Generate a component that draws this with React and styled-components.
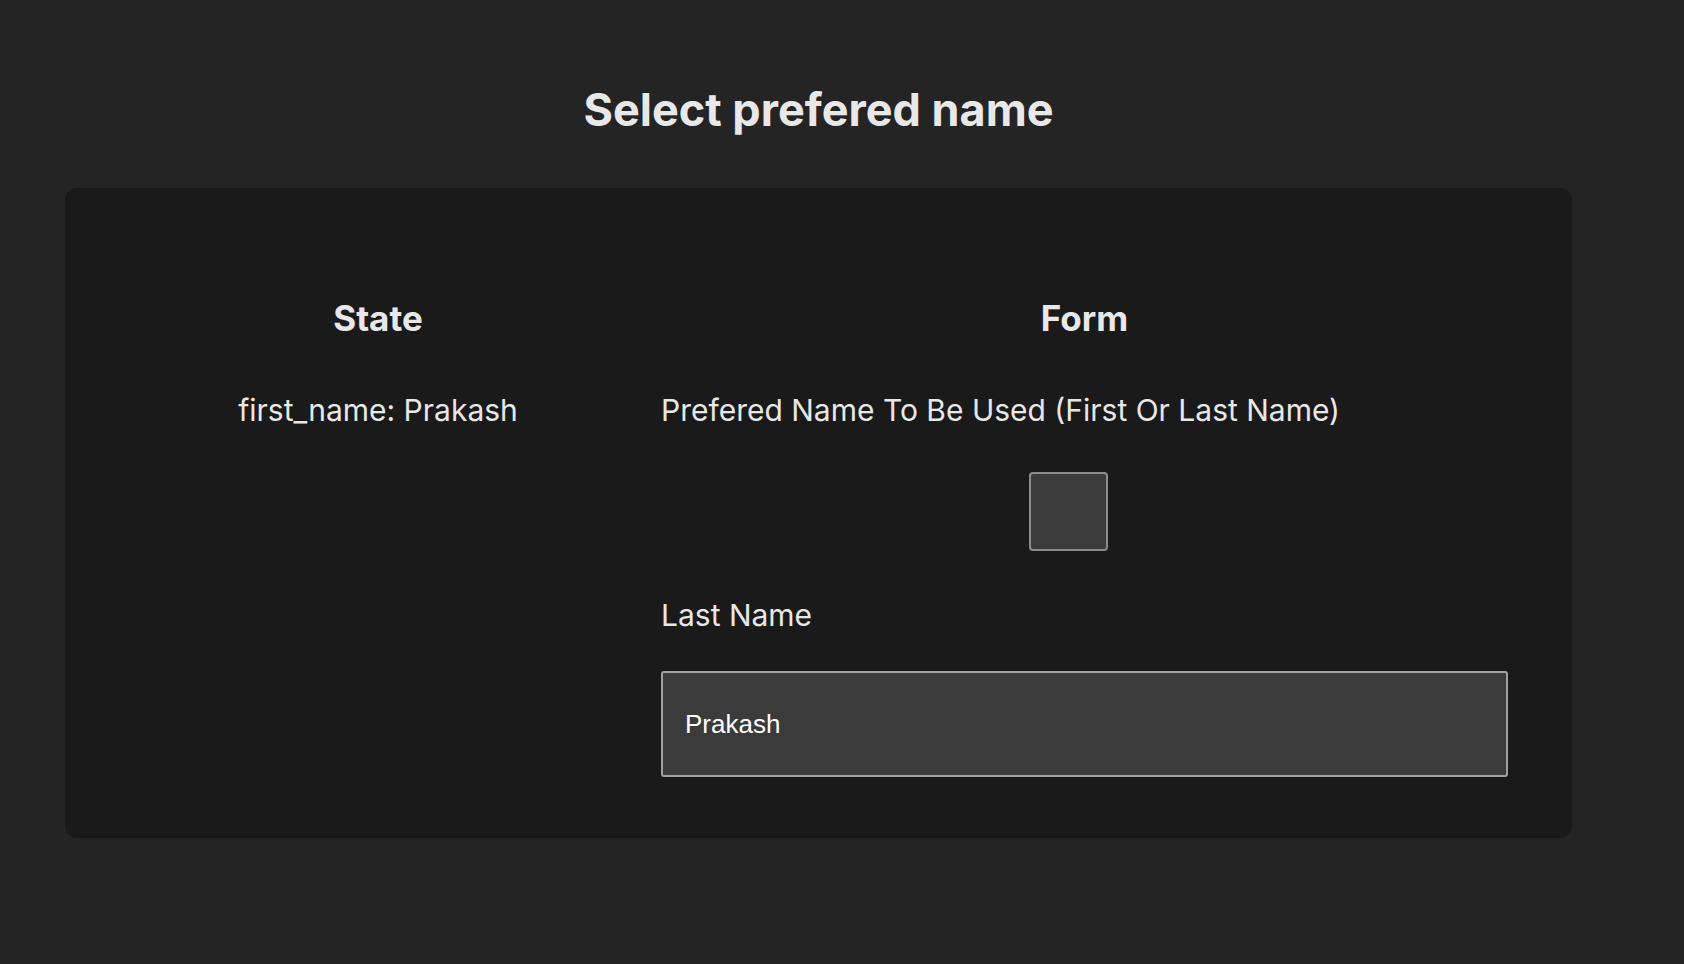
import styled, { createGlobalStyle } from 'styled-components';

const Global = createGlobalStyle`
  body {
    margin: 0;
    background: #242424;
    font-family: Inter, "Noto Sans", sans-serif;
    color: rgba(255, 255, 255, 0.87);
  }
`;

const Page = styled.main`
  width: 1684px;
  height: 964px;
  padding: 84px 0 0 65px;
  box-sizing: border-box;
`;

const Title = styled.h1`
  width: 1507px;
  margin: 0 0 52px;
  text-align: center;
  font-size: 45px;
  line-height: 52px;
  font-weight: 700;
  color: #e8e8e8;
`;

const Card = styled.section`
  width: 1507px;
  height: 650px;
  box-sizing: border-box;
  background: #1a1a1a;
  border-radius: 12px;
  padding: 110px 64px 64px;
  display: grid;
  grid-template-columns: 498px 1fr;
  column-gap: 34px;
`;

const Column = styled.div`
  display: flex;
  flex-direction: column;
  align-items: ${p => (p.$center ? 'center' : 'stretch')};
`;

const Heading = styled.h2`
  margin: 0 0 52px;
  text-align: center;
  font-size: 35px;
  line-height: 40px;
  font-weight: 700;
  color: #e8e8e8;
`;

const Text = styled.div`
  font-size: 30px;
  line-height: 40px;
  color: #e8e8e8;
`;

const Check = styled.input.attrs({ type: 'checkbox' })`
  appearance: none;
  width: 79px;
  height: 79px;
  margin: 42px 0 44px 368px;
  background: #3b3b3b;
  border: 2px solid #8c8c8c;
  border-radius: 4px;
  box-sizing: border-box;
`;

const Input = styled.input`
  margin-top: 36px;
  height: 106px;
  box-sizing: border-box;
  background: #3b3b3b;
  border: 2px solid #a0a0a0;
  border-radius: 3px;
  padding: 0 22px;
  font-family: "Liberation Sans", Arial, sans-serif;
  font-size: 26px;
  color: #ffffff;
  outline: none;
`;

export default function App() {
  return (
    <Page>
      <Global />
      <Title>Select prefered name</Title>
      <Card>
        <Column $center>
          <Heading>State</Heading>
          <Text>first_name: Prakash</Text>
        </Column>
        <Column>
          <Heading>Form</Heading>
          <Text>Prefered Name To Be Used (First Or Last Name)</Text>
          <Check />
          <Text>Last Name</Text>
          <Input defaultValue="Prakash" />
        </Column>
      </Card>
    </Page>
  );
}
